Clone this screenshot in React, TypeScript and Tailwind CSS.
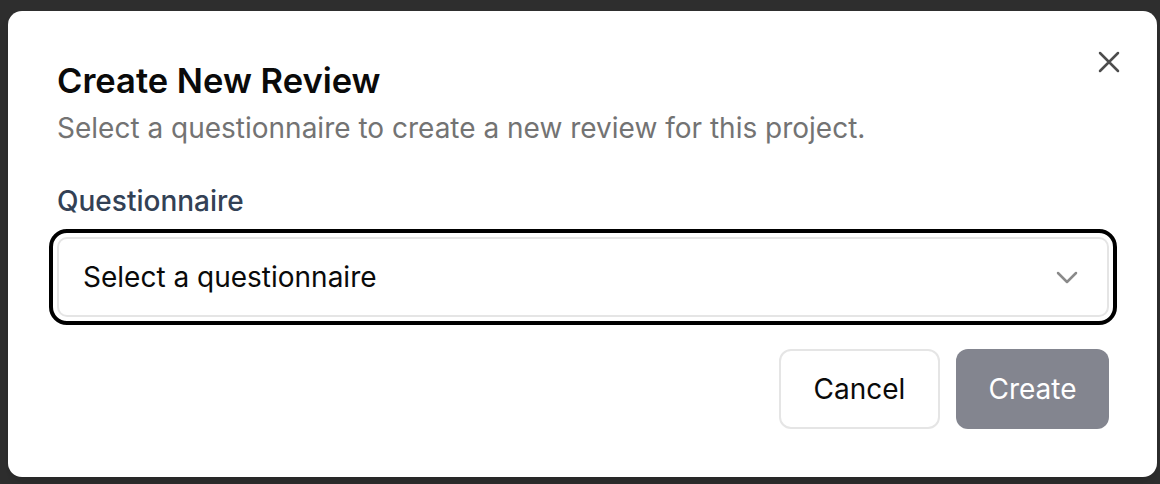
import React from "react";

export default function App() {
  return (
    <div
      className="w-[1160px] h-[484px] bg-[#2e2e2e] pt-[11px] pl-[8px] overflow-hidden"
      style={{ fontFamily: "Inter, 'Noto Sans', sans-serif" }}
    >
      <div className="relative w-[1149px] rounded-[14px] bg-white pt-[50px] pl-[49px] pr-[48px] pb-[48px] shadow-lg">
        <button className="absolute right-[36px] top-[39px] w-[24px] h-[24px] text-[#4d4d4d]">
          <svg width="24" height="24" viewBox="0 0 24 24" fill="none" stroke="currentColor" strokeWidth="2.5" strokeLinecap="round">
            <path d="M3 3 L21 21 M21 3 L3 21" />
          </svg>
        </button>
        <h2 className="text-[34.5px] leading-[40px] font-semibold text-[#0a0a0a]">
          Create New Review
        </h2>
        <p className="mt-[11px] text-[28px] leading-[32px] text-[#737373]">
          Select a questionnaire to create a new review for this project.
        </p>
        <div className="mt-[41px] text-[28px] leading-[32px] font-medium text-[#334155]">
          Questionnaire
        </div>
        <div className="mt-[20px] h-[80px] w-full rounded-[10px] border-2 border-[#e5e5e5] outline-4 outline-offset-4 outline-black flex items-center justify-between pl-[24px] pr-[28px]">
          <span className="text-[28px] text-[#0a0a0a]">Select a questionnaire</span>
          <svg width="24" height="14" viewBox="0 0 24 14" fill="none" stroke="#8a8a8a" strokeWidth="2.5" strokeLinecap="round" strokeLinejoin="round">
            <path d="M3 3 L12 12 L21 3" />
          </svg>
        </div>
        <div className="mt-[32px] flex justify-end gap-[16px]">
          <button className="w-[161px] h-[80px] rounded-[12px] border-2 border-[#e5e5e5] bg-white text-[28px] font-normal text-[#0a0a0a]">
            Cancel
          </button>
          <button className="w-[153px] h-[80px] rounded-[12px] bg-[#83858f] text-[28px] font-normal text-white">
            Create
          </button>
        </div>
      </div>
    </div>
  );
}
